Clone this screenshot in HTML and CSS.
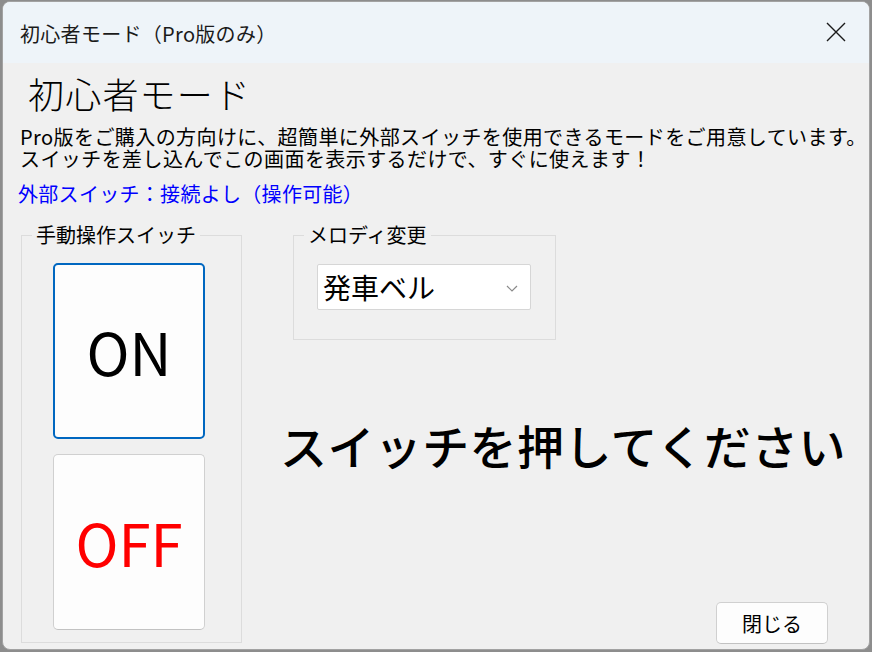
FILE: index.html
```html
<!DOCTYPE html>
<html lang="ja">
<head>
<meta charset="utf-8">
<title>初心者モード</title>
<link rel="stylesheet" href="styles.css">
</head>
<body>
<div class="window">
  <div class="titlebar">
    <span class="title">初心者モード（Pro版のみ）</span>
    <span class="close-x">
      <svg width="20" height="20" viewBox="0 0 20 20"><path d="M1 1 L19 19 M19 1 L1 19" stroke="#1a1a1a" stroke-width="1.4" fill="none"/></svg>
    </span>
  </div>
  <div class="content">
    <h1 class="heading">初心者モード</h1>
    <p class="desc">Pro版をご購入の方向けに、超簡単に外部スイッチを使用できるモードをご用意しています。<br>スイッチを差し込んでこの画面を表示するだけで、すぐに使えます！</p>
    <p class="status">外部スイッチ：接続よし（操作可能）</p>
    <div class="main">
      <fieldset class="group group-switch">
        <legend>手動操作スイッチ</legend>
        <div class="switch-stack">
          <button class="bigbtn bigbtn-on">ON</button>
          <button class="bigbtn bigbtn-off">OFF</button>
        </div>
      </fieldset>
      <div class="right">
        <fieldset class="group group-melody">
          <legend>メロディ変更</legend>
          <div class="select">
            <span class="select-text">発車ベル</span>
            <svg class="chev" width="12" height="7" viewBox="0 0 12 7"><path d="M1 1 L6 6 L11 1" stroke="#8a8a8a" stroke-width="1.2" fill="none"/></svg>
          </div>
        </fieldset>
        <div class="prompt">スイッチを押してください</div>
        <button class="closebtn">閉じる</button>
      </div>
    </div>
  </div>
</div>
</body>
</html>
```

FILE: styles.css
```css
html, body {
  margin: 0;
  padding: 0;
}
body {
  width: 872px;
  height: 652px;
  background: #8d8d8d;
  font-family: "Noto Sans CJK JP", "Noto Sans", sans-serif;
  overflow: hidden;
}
.window {
  box-sizing: border-box;
  width: 868px;
  height: 649px;
  margin: 1px 0 0 2px;
  border: 1px solid #a2a2a2;
  border-radius: 8px;
  background: #f0f0f0;
  overflow: hidden;
  display: flex;
  flex-direction: column;
}
.titlebar {
  height: 61px;
  flex: none;
  background: #eef4f9;
  display: flex;
  align-items: center;
  justify-content: space-between;
  padding: 0 23px 0 17px;
}
.title {
  font-size: 20px;
  color: #1a1a1a;
  line-height: 24px;
  margin-top: 2px;
  letter-spacing: 0.3px;
}
.close-x {
  display: flex;
  margin-top: -2px;
}
.content {
  flex: 1;
  display: flex;
  flex-direction: column;
  padding: 10px 0 0 0;
}
.heading {
  margin: 0 0 0 25px;
  font-size: 36px;
  font-weight: 300;
  line-height: 40px;
  color: #000;
  letter-spacing: 1.2px;
}
.desc {
  margin: 13px 0 0 17px;
  font-size: 20px;
  line-height: 22px;
  color: #000;
  white-space: nowrap;
  letter-spacing: 0.42px;
}
.status {
  margin: 13px 0 0 15px;
  font-size: 20px;
  line-height: 22px;
  color: #0000ff;
  letter-spacing: 0.3px;
}
.main {
  flex: 1;
  display: flex;
  margin-top: 18px;
}
.group {
  margin: 0;
  padding: 0;
  border: 1px solid #dcdcdc;
  min-width: 0;
}
.group legend {
  margin-left: 10px;
  padding: 0 4px;
  font-size: 20px;
  line-height: 24px;
  color: #000;
}
.group-switch {
  box-sizing: border-box;
  width: 221px;
  height: 420px;
  margin-left: 18px;
}
.switch-stack {
  display: flex;
  flex-direction: column;
  gap: 15px;
  margin: 16px 0 0 31px;
}
.bigbtn {
  box-sizing: border-box;
  width: 152px;
  height: 176px;
  background: #fdfdfd;
  border: 1px solid #d0d0d0;
  border-bottom-color: #c2c2c2;
  border-radius: 5px;
  font-family: "Noto Sans CJK JP", "Noto Sans", sans-serif;
  font-size: 58px;
  line-height: 1;
  padding: 0;
  display: flex;
  align-items: center;
  justify-content: center;
}
.bigbtn-on {
  color: #000;
  border: 2px solid #0067c0;
}
.bigbtn-off {
  color: #ff0000;
}
.right {
  flex: 1;
  display: flex;
  flex-direction: column;
  align-items: flex-start;
}
.group-melody {
  box-sizing: border-box;
  width: 263px;
  height: 117px;
  margin-left: 51px;
}
.select {
  box-sizing: border-box;
  width: 214px;
  height: 46px;
  margin: 17px 0 0 23px;
  background: #fff;
  border: 1px solid #d6d6d6;
  border-radius: 2px;
  display: flex;
  align-items: center;
  justify-content: space-between;
  padding: 0 12px 0 5px;
}
.select-text {
  font-size: 28px;
  line-height: 32px;
  color: #000;
}
.chev {
  margin-top: 2px;
}
.prompt {
  margin: 77px 0 0 38px;
  font-size: 47px;
  font-weight: 500;
  line-height: 56px;
  color: #000;
  white-space: nowrap;
  letter-spacing: 0.4px;
}
.closebtn {
  box-sizing: border-box;
  margin: auto 41px 5px 0;
  align-self: flex-end;
  width: 112px;
  height: 42px;
  background: #fdfdfd;
  border: 1px solid #d0d0d0;
  border-bottom-color: #c2c2c2;
  border-radius: 5px;
  font-family: "Noto Sans CJK JP", "Noto Sans", sans-serif;
  font-size: 20px;
  color: #000;
  padding: 0;
}
```
